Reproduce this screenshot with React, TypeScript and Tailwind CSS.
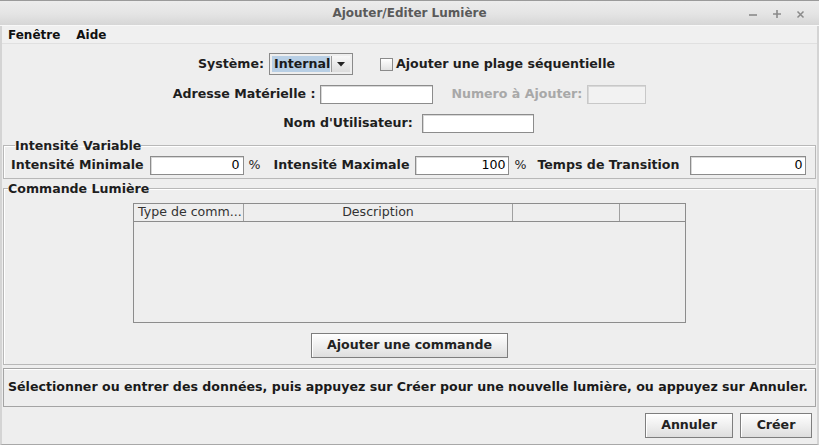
import React from "react";

const font = { fontFamily: '"DejaVu Sans", Verdana, sans-serif' };

function TextField({ w, value = "", disabled = false }: { w: number; value?: string; disabled?: boolean }) {
  return (
    <div
      className={`shrink-0 h-[19px] border ${disabled ? "bg-[#f2f2f2] border-[#c8c8c8]" : "bg-white border-[#8c8c8c]"} flex items-center justify-end pr-[3px] text-[12.6px] font-normal text-black shadow-[inset_1px_1px_0_#d8d8d8]`}
      style={{ width: w }}
    >
      {value}
    </div>
  );
}

function Button({ label, w }: { label: string; w: number }) {
  return (
    <div
      className="shrink-0 h-[25px] border border-[#7e7e7e] bg-[linear-gradient(#ffffff,#f2f2f2_40%,#dedede)] flex items-center justify-center text-[12.6px] font-bold text-[#222] shadow-[inset_1px_1px_0_#ffffff] whitespace-nowrap"
      style={{ width: w }}
    >
      {label}
    </div>
  );
}

export default function App() {
  return (
    <div className="w-[819px] h-[445px] bg-[#eeeeee] flex flex-col overflow-hidden text-[#1e1e1e]" style={font}>
      {/* title bar */}
      <div className="h-[26px] shrink-0 border-t border-[#9a9a9a] bg-[linear-gradient(#ececec,#e4e4e4_55%,#d6d6d6)] border-b border-b-[#f8f8f8] relative flex items-center justify-center">
        <span className="text-[12px] font-bold text-[#5a5a5a]">Ajouter/Editer Lumière</span>
        <div className="absolute right-[14px] top-[8px] flex items-center gap-[14px]">
          <svg width="10" height="10" viewBox="0 0 10 10">
            <path d="M1 6 H9" stroke="#8a8a8a" strokeWidth="1.6" />
          </svg>
          <svg width="10" height="10" viewBox="0 0 10 10">
            <path d="M1 5 H9 M5 1 V9" stroke="#8a8a8a" strokeWidth="1.6" />
          </svg>
          <svg width="9" height="9" viewBox="0 0 9 9">
            <path d="M1.5 1.5 L7.5 7.5 M7.5 1.5 L1.5 7.5" stroke="#8a8a8a" strokeWidth="1.5" />
          </svg>
        </div>
      </div>
      <div className="flex-1 flex flex-col border-x-2 border-[#d4d4d4] border-b border-b-[#a8a8a8]">
        {/* menu bar */}
        <div className="h-[18px] shrink-0 bg-[#f0f0f0] border-b border-[#e0e0e0] flex items-center gap-[16px] pl-[6px] text-[12px] font-bold text-[#111]">
          <span>Fenêtre</span>
          <span>Aide</span>
        </div>

        {/* row 1 */}
        <div className="mt-[9px] h-[22px] flex items-center justify-center text-[12.6px] font-bold pr-[6px] whitespace-nowrap">
          <span>Système:</span>
          <div className="ml-[5px] w-[84px] h-[22px] border border-[#8a8a8a] flex bg-[#eeeeee]">
            <div className="flex-1 m-[2px] mr-0 bg-[#b8cfe5] flex items-center pl-[2px] text-[#1a1a1a]">Internal</div>
            <div className="w-[20px] border-l border-[#9a9a9a] m-[2px] ml-[1px] bg-[linear-gradient(#f8f8f8,#dcdcdc)] flex items-center justify-center">
              <svg width="8" height="5" viewBox="0 0 8 5">
                <path d="M0 0 H8 L4 4.5 Z" fill="#222" />
              </svg>
            </div>
          </div>
          <div className="ml-[27px] w-[13px] h-[13px] border border-[#8a8a8a] bg-[linear-gradient(#ffffff,#e2e2e2)]" />
          <span className="ml-[3px]">Ajouter une plage séquentielle</span>
        </div>

        {/* row 2 */}
        <div className="mt-[10px] h-[19px] flex items-center justify-center text-[12.6px] font-bold whitespace-nowrap">
          <span>Adresse Matérielle :</span>
          <div className="ml-[5px]"><TextField w={113} /></div>
          <span className="ml-[18px] text-[#a8a8a8]">Numero à Ajouter:</span>
          <div className="ml-[5px]"><TextField w={59} disabled /></div>
        </div>

        {/* row 3 */}
        <div className="mt-[10px] h-[19px] flex items-center justify-center text-[12.6px] font-bold whitespace-nowrap pr-[2px]">
          <span>Nom d'Utilisateur:</span>
          <div className="ml-[9px]"><TextField w={112} /></div>
        </div>

        {/* Intensité Variable */}
        <fieldset className="mt-[5px] mx-[1px] border border-[#b8b8b8] shadow-[inset_1px_1px_0_#ffffff] pb-[3px] pl-[7px] pr-[7px]">
          <legend className="ml-[4px] px-0 text-[12.6px] font-bold leading-[15px]">Intensité Variable</legend>
          <div className="flex items-center text-[12.6px] font-bold mt-[3px] whitespace-nowrap">
            <span className="shrink-0">Intensité Minimale</span>
            <div className="ml-[6px] shrink-0"><TextField w={94} value="0" /></div>
            <span className="ml-[5px] font-normal shrink-0">%</span>
            <span className="ml-[13px] shrink-0">Intensité Maximale</span>
            <div className="ml-[6px] shrink-0"><TextField w={94} value="100" /></div>
            <span className="ml-[5px] font-normal shrink-0">%</span>
            <span className="ml-[11px] shrink-0">Temps de Transition</span>
            <div className="ml-[11px] shrink-0"><TextField w={116} value="0" /></div>
          </div>
        </fieldset>

        {/* Commande Lumière */}
        <fieldset className="mt-[2px] mx-[1px] border border-[#b8b8b8] shadow-[inset_1px_1px_0_#ffffff] pb-[6px] flex flex-col items-center">
          <legend className="ml-[4px] px-0 text-[12.6px] font-bold leading-[15px]">Commande Lumière</legend>
          <div className="mt-[7px] w-[553px] h-[120px] border border-[#8c8c8c] bg-[#eeeeee] flex flex-col">
            <div className="h-[18px] border-b border-[#8c8c8c] flex text-[12.6px] text-[#333] font-normal bg-[#eeeeee]">
              <div className="w-[110px] border-r border-[#a0a0a0] pl-[4px] flex items-center whitespace-nowrap overflow-hidden">Type de comm...</div>
              <div className="w-[269px] border-r border-[#a0a0a0] flex items-center justify-center">Description</div>
              <div className="w-[107px] border-r border-[#a0a0a0]" />
              <div className="flex-1" />
            </div>
          </div>
          <div className="mt-[10px]"><Button label="Ajouter une commande" w={197} /></div>
        </fieldset>

        {/* message */}
        <div className="mt-[3px] mx-[1px] h-[39px] border border-[#a4a4a4] bg-[#eeeeee] shadow-[inset_0_1px_0_#ffffff] flex items-center pl-[4px] text-[12.6px] font-bold text-[#1a1a1a] whitespace-nowrap">
          Sélectionner ou entrer des données, puis appuyez sur Créer pour une nouvelle lumière, ou appuyez sur Annuler.
        </div>

        {/* bottom buttons */}
        <div className="flex justify-end gap-[7px] mt-[6px] pr-[5px]">
          <Button label="Annuler" w={88} />
          <Button label="Créer" w={72} />
        </div>
      </div>
    </div>
  );
}
